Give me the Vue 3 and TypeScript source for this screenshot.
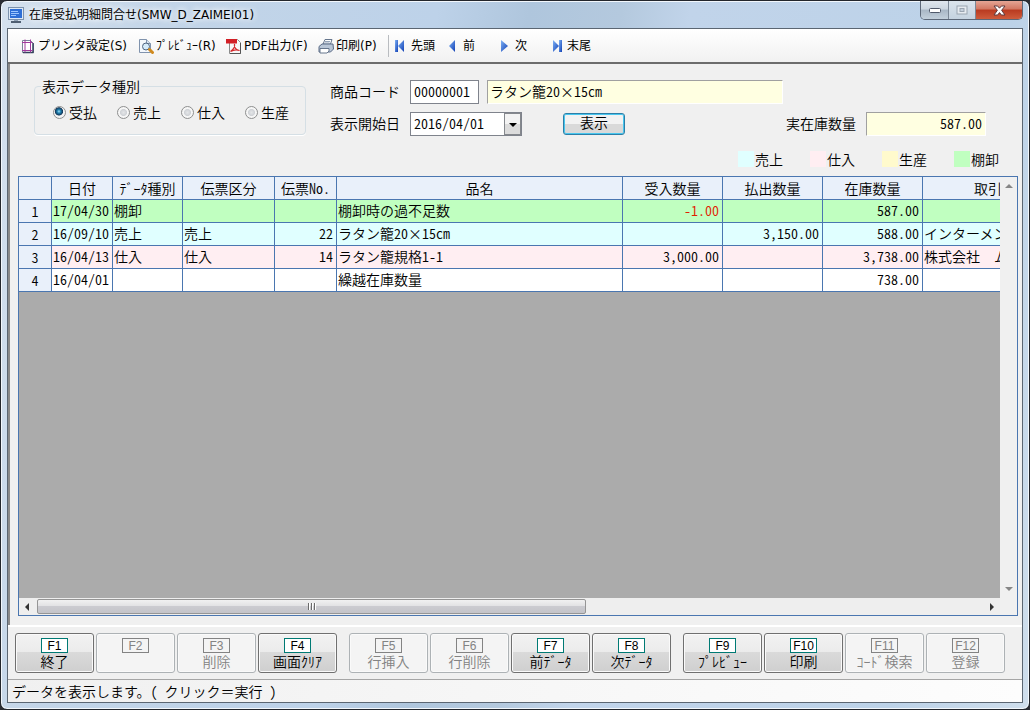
<script setup lang="ts">
import { ref } from 'vue'

interface Tool { icon: string; label: string; width: string }
interface FnKey { key: string; label: string; enabled: boolean }
interface Row {
  tone: string
  date: string
  kind: string
  slip: string
  no: string
  name: string
  inQty: string
  outQty: string
  stock: string
  partner: string
}

const tools: Tool[] = [
  { icon: 'setup', label: 'プリンタ設定(S)', width: 'w-setup' },
  { icon: 'preview', label: 'ﾌﾟﾚﾋﾞｭｰ(R)', width: 'w-preview' },
  { icon: 'pdf', label: 'PDF出力(F)', width: 'w-pdf' },
  { icon: 'print', label: '印刷(P)', width: 'w-print' },
]

const moves = [
  { icon: 'first', label: '先頭' },
  { icon: 'prev', label: '前' },
  { icon: 'next', label: '次' },
  { icon: 'last', label: '末尾' },
]

const kinds = ['受払', '売上', '仕入', '生産']
const kind = ref('受払')
const code = ref('00000001')
const productName = 'ラタン籠20×15cm'
const startDate = ref('2016/04/01')

const legends = [
  { tone: 'sales', label: '売上' },
  { tone: 'purchase', label: '仕入' },
  { tone: 'product', label: '生産' },
  { tone: 'count', label: '棚卸' },
]

const headers = ['日付', 'ﾃﾞｰﾀ種別', '伝票区分', '伝票No.', '品名', '受入数量', '払出数量', '在庫数量', '取引先名']

const rows: Row[] = [
  { tone: 'count', date: '17/04/30', kind: '棚卸', slip: '', no: '', name: '棚卸時の過不足数', inQty: '-1.00', outQty: '', stock: '587.00', partner: '' },
  { tone: 'sales', date: '16/09/10', kind: '売上', slip: '売上', no: '22', name: 'ラタン籠20×15cm', inQty: '', outQty: '3,150.00', stock: '588.00', partner: 'インターメン' },
  { tone: 'purchase', date: '16/04/13', kind: '仕入', slip: '仕入', no: '14', name: 'ラタン籠規格1-1', inQty: '3,000.00', outQty: '', stock: '3,738.00', partner: '株式会社　ム' },
  { tone: 'plain', date: '16/04/01', kind: '', slip: '', no: '', name: '繰越在庫数量', inQty: '', outQty: '', stock: '738.00', partner: '' },
]

const keyGroups: FnKey[][] = [
  [
    { key: 'F1', label: '終了', enabled: true },
    { key: 'F2', label: '', enabled: false },
    { key: 'F3', label: '削除', enabled: false },
    { key: 'F4', label: '画面ｸﾘｱ', enabled: true },
  ],
  [
    { key: 'F5', label: '行挿入', enabled: false },
    { key: 'F6', label: '行削除', enabled: false },
    { key: 'F7', label: '前ﾃﾞｰﾀ', enabled: true },
    { key: 'F8', label: '次ﾃﾞｰﾀ', enabled: true },
  ],
  [
    { key: 'F9', label: 'ﾌﾟﾚﾋﾞｭｰ', enabled: true },
    { key: 'F10', label: '印刷', enabled: true },
    { key: 'F11', label: 'ｺｰﾄﾞ検索', enabled: false },
    { key: 'F12', label: '登録', enabled: false },
  ],
]

const status = 'データを表示します。( クリック＝実行 )'

// Splits text into runs: ASCII takes half-width forms, the multiplication sign a full-width one.
function runs(text: string): { text: string; form: string }[] {
  return (text.match(/[\x20-\x7e]+|×|[^\x20-\x7e×]+/g) ?? []).map((t) => ({
    text: t,
    form: t === '×' ? 'full' : /^[\x20-\x7e]/.test(t) ? 'half' : '',
  }))
}
</script>

<template>
  <div class="window">
    <header class="titlebar">
      <svg class="app-icon" width="16" height="16" viewBox="0 0 16 16" aria-hidden="true">
        <rect x="0.5" y="0.5" width="15" height="12" fill="#dfe9f5" stroke="#7d93ad" />
        <rect x="2" y="2" width="12" height="9" fill="#2e6fd6" />
        <path d="M3 4.500h7M3 6.500h8M3 8.500h5" stroke="#9cc6ff" />
        <path d="M6 13h4v1H6z" fill="#8fa0b4" />
        <path d="M3 14h10v2H3z" fill="#4f5f73" />
      </svg>
      <h1 class="title">在庫受払明細問合せ(SMW_D_ZAIMEI01)</h1>
      <div class="caption">
        <button class="cap cap-min" type="button" aria-label="最小化">
          <svg width="14" height="8" viewBox="0 0 14 8"><rect x="1.5" y="2.5" width="11" height="4" rx="1" fill="#fff" stroke="#50596a" /></svg>
        </button>
        <button class="cap cap-max" type="button" aria-label="最大化" disabled>
          <svg width="12" height="10" viewBox="0 0 12 10"><rect x="1" y="1" width="10" height="8" fill="#e6ebf0" stroke="#9aa5b1" /><rect x="4" y="3.5" width="4" height="3" fill="#c5d0dc" stroke="#9aa5b1" /></svg>
        </button>
        <button class="cap cap-close" type="button" aria-label="閉じる">
          <svg width="13" height="11" viewBox="0 0 13 11"><path d="M1 1h3.6L6.5 3.2 8.4 1H12L8.6 5.3 12 10H8.4L6.5 7.6 4.6 10H1l3.4-4.7z" fill="#fff" stroke="#5c3a3f" /></svg>
        </button>
      </div>
    </header>

    <div class="client">
      <nav class="toolbar">
        <button v-for="t in tools" :key="t.icon" type="button" class="tool" :class="t.width">
          <svg width="16" height="16" viewBox="0 0 16 16" aria-hidden="true">
            <template v-if="t.icon === 'setup'">
              <path d="M2.500 2.500h8l3 3v9h-11z" fill="#fff" stroke="#7a8499" />
              <path d="M13 5v10M3 14.500h10.500" stroke="#34435c" stroke-width="1.500" />
              <path d="M5 1.500v13M10.500 1.500v13M2 4.500h10.500M2 12.500h10.500" stroke="#a03a9c" />
            </template>
            <template v-else-if="t.icon === 'preview'">
              <path d="M1.500 1.500h7l4 4v9h-11z" fill="#f4f8fd" stroke="#8093ad" />
              <path d="M8.500 1.500v4h4" fill="#d7e3f0" stroke="#8093ad" />
              <circle cx="8" cy="8.500" r="3.500" fill="#d5ebfb" stroke="#4e6480" />
              <path d="M11.500 11.500l3 3" stroke="#d08a1e" stroke-width="3" stroke-linecap="round" />
            </template>
            <template v-else-if="t.icon === 'pdf'">
              <path d="M3.500 1.500h8l3 3v11h-11z" fill="#f7f7f7" stroke="#8b8b8b" />
              <path d="M14.500 5v10.500H4" fill="none" stroke="#555" />
              <path d="M0 1h11v4.500H0z" fill="#d21f26" />
              <path d="M4.500 13.500c3-2 4.500-5 4-7.500-.8 3.500 1.500 6 5 6.500-3-1.300-6-.8-9 1z" fill="none" stroke="#d4282c" stroke-width="1.200" />
            </template>
            <template v-else>
              <path d="M5 6l2-4.500h7L12.500 6z" fill="#fff" stroke="#66768d" />
              <path d="M1 8.500L4 6h11l.5 5-3 3H1z" fill="#b9c6d7" stroke="#5a6b86" />
              <path d="M2 10.500h9v2.500l-2 2H2z" fill="#fff" stroke="#66768d" />
              <path d="M7 3.500h5M6.500 5h5" stroke="#93a3b8" />
            </template>
          </svg>
          <span>{{ t.label }}</span>
        </button>
        <span class="divider"></span>
        <button v-for="m in moves" :key="m.icon" type="button" class="tool move">
          <svg width="16" height="16" viewBox="0 0 16 16" aria-hidden="true">
            <defs>
              <linearGradient :id="'g-' + m.icon" x1="0" y1="0" x2="1" y2="1">
                <stop offset="0" stop-color="#7fb2f5" />
                <stop offset="1" stop-color="#103fb4" />
              </linearGradient>
            </defs>
            <g :fill="'url(#g-' + m.icon + ')'">
              <template v-if="m.icon === 'first'">
                <path d="M3 2h3v12H3z" />
                <path d="M12 2v12L6 8z" />
              </template>
              <path v-else-if="m.icon === 'prev'" d="M11 2v12L5 8z" />
              <path v-else-if="m.icon === 'next'" d="M5 2v12l7-6z" />
              <template v-else>
                <path d="M5 2v12l6-6z" />
                <path d="M11 2h3v12h-3z" />
              </template>
            </g>
          </svg>
          <span>{{ m.label }}</span>
        </button>
      </nav>

      <main class="panel">
        <form class="query" @submit.prevent>
          <fieldset class="kinds">
            <legend>表示データ種別</legend>
            <label v-for="k in kinds" :key="k" class="radio">
              <input v-model="kind" type="radio" name="kind" :value="k" />
              <span>{{ k }}</span>
            </label>
          </fieldset>
          <div class="fields">
            <div class="line">
              <label class="caption-label" for="code">商品コード</label>
              <input id="code" v-model="code" class="box code half" type="text" />
              <output class="readout name" for="code"><span v-for="(r, i) in runs(productName)" :key="i" :class="r.form">{{ r.text }}</span></output>
            </div>
            <div class="line">
              <label class="caption-label" for="start">表示開始日</label>
              <span class="combo">
                <select id="start" v-model="startDate" class="box half">
                  <option>2016/04/01</option>
                </select>
                <span class="drop" aria-hidden="true"></span>
              </span>
              <button class="show" type="submit">表示</button>
              <label class="stock-label" for="stock">実在庫数量</label>
              <output id="stock" class="readout stock half">587.00</output>
            </div>
          </div>
        </form>

        <ul class="legends">
          <li v-for="l in legends" :key="l.tone"><i class="swatch" :class="l.tone"></i>{{ l.label }}</li>
        </ul>

        <section class="grid">
          <div class="view">
            <table>
              <colgroup>
                <col class="c-num" /><col class="c-date" /><col class="c-kind" /><col class="c-slip" /><col class="c-no" />
                <col class="c-name" /><col class="c-qty" /><col class="c-qty" /><col class="c-qty" /><col class="c-partner" />
              </colgroup>
              <thead>
                <tr>
                  <th></th>
                  <th v-for="h in headers" :key="h" scope="col"><span v-for="(r, i) in runs(h)" :key="i" :class="r.form">{{ r.text }}</span></th>
                </tr>
              </thead>
              <tbody>
                <tr v-for="(row, i) in rows" :key="row.date" :class="row.tone">
                  <th scope="row" class="half">{{ i + 1 }}</th>
                  <td class="half">{{ row.date }}</td>
                  <td>{{ row.kind }}</td>
                  <td>{{ row.slip }}</td>
                  <td class="num half">{{ row.no }}</td>
                  <td><span v-for="(r, j) in runs(row.name)" :key="j" :class="r.form">{{ r.text }}</span></td>
                  <td class="num half" :class="{ minus: row.inQty.startsWith('-') }">{{ row.inQty }}</td>
                  <td class="num half">{{ row.outQty }}</td>
                  <td class="num half">{{ row.stock }}</td>
                  <td>{{ row.partner }}</td>
                </tr>
              </tbody>
            </table>
          </div>
          <div class="vbar">
            <i class="arrow up"></i>
            <i class="arrow down"></i>
          </div>
          <div class="hbar">
            <i class="arrow left"></i>
            <div class="track"><div class="thumb"><i></i><i></i><i></i></div></div>
            <i class="arrow right"></i>
          </div>
          <div class="corner"></div>
        </section>
      </main>

      <div class="keys">
        <div v-for="(g, gi) in keyGroups" :key="gi" class="group">
          <button v-for="f in g" :key="f.key" type="button" class="fn" :disabled="!f.enabled">
            <span class="badge">{{ f.key }}</span>
            <span class="fn-label">{{ f.label }}</span>
          </button>
        </div>
      </div>

      <footer class="status"><span v-for="(r, i) in runs(status)" :key="i" :class="r.form">{{ r.text }}</span></footer>
    </div>
  </div>
</template>

<style>
body {
  margin: 0;
  background: #2b2d33;
}
</style>

<style scoped>
.window {
  box-sizing: border-box;
  min-height: 100vh;
  display: flex;
  flex-direction: column;
  padding: 0 6px 6px;
  border: 1px solid #23262c;
  border-radius: 7px;
  background: linear-gradient(100deg, #d5e1ee 0%, #c3d5e8 14%, #bdd2e9 38%, #afc6dd 46%, #b4c9de 54%, #c1d4ea 60%, #bcd2e8 88%, #cfdeec 100%);
  box-shadow: inset 0 0 0 1px #f2f7fc;
  font-family: "Noto Sans CJK JP", sans-serif;
  font-size: 14px;
  font-weight: 350;
  line-height: 16px;
  color: #000;
}
button, input, select {
  font: inherit;
  color: inherit;
  margin: 0;
}
.half {
  font-feature-settings: "hwid";
  white-space: pre;
}
.full {
  font-feature-settings: "fwid";
}

.titlebar {
  display: flex;
  align-items: center;
  height: 27px;
  padding-left: 1px;
}
.title {
  margin: 0 0 0 5px;
  flex: 1;
  font: 12px/16px "DejaVu Sans", "Noto Sans CJK JP", sans-serif;
  text-shadow: 0 0 6px #fff, 0 0 6px #fff;
}
.caption {
  display: flex;
  align-self: flex-start;
  border: 1px solid #5d6878;
  border-top: 0;
  border-radius: 0 0 5px 5px;
  overflow: hidden;
}
.cap {
  display: flex;
  align-items: center;
  justify-content: center;
  width: 28px;
  height: 18px;
  padding: 0;
  border: 0;
  border-right: 1px solid #7c8896;
  background: linear-gradient(#dfe6ee 0, #ccd6e0 45%, #a9b7c5 50%, #c3d0dc 100%);
}
.cap-max {
  width: 27px;
  background: linear-gradient(#dbe4ec 0, #c5d3e0 100%);
}
.cap-close {
  width: 46px;
  border-right: 0;
  background: linear-gradient(#e5a595 0, #d27762 45%, #b93a20 50%, #cf5c3c 100%);
}

.client {
  flex: 1;
  display: flex;
  flex-direction: column;
  border: 1px solid #5b6672;
  background: #f0f0f0;
}
.toolbar {
  display: flex;
  align-items: center;
  height: 33px;
  padding-left: 12px;
  border-bottom: 2px solid #6c6c6c;
  background: linear-gradient(#ffffff, #f1f1f1);
  font: 12px/16px "DejaVu Sans", "Noto Sans CJK JP", sans-serif;
}
.tool {
  display: flex;
  align-items: center;
  gap: 2px;
  padding: 0;
  border: 0;
  background: none;
  white-space: nowrap;
}
.tool svg {
  flex: none;
}
.w-setup { width: 118px; }
.w-preview { width: 88px; }
.w-pdf { width: 92px; }
.w-print { width: 70px; }
.move {
  gap: 3px;
  width: 52px;
}
.divider {
  width: 1px;
  height: 22px;
  margin-right: 3px;
  background: #b9bcc0;
}

.panel {
  flex: 1;
  display: flex;
  flex-direction: column;
  padding: 14px 4px 9px 8px;
  border-left: 2px solid #8a8a8a;
}
.query {
  display: flex;
}
.kinds {
  box-sizing: border-box;
  display: flex;
  width: 272px;
  height: 57px;
  min-width: 0;
  margin: 0 24px 0 16px;
  padding: 10px 0 0 18px;
  border: 1px solid #d5dfe5;
  border-radius: 4px;
  box-shadow: 0 1px 0 #fff;
}
.kinds legend {
  margin-left: -12px;
  padding: 0 1px;
}
.radio {
  display: flex;
  flex: none;
  align-items: center;
  gap: 3px;
  width: 64px;
  height: 16px;
}
.radio:last-child {
  width: auto;
}
.radio input {
  appearance: none;
  box-sizing: border-box;
  flex: none;
  width: 13px;
  height: 13px;
  border: 1px solid #8e8f8f;
  border-radius: 50%;
  background: radial-gradient(circle at 50% 50%, #e4e6e8 0, #cfd2d6 40%, #f6f6f6 50%);
}
.radio input:checked {
  background: radial-gradient(circle at 45% 40%, #9fe0f8 0, #1f7fae 20%, #16395a 42%, #f3f3f3 50%);
}
.fields {
  flex: 1;
  display: flex;
  flex-direction: column;
  gap: 8px;
  padding-top: 2px;
}
.line {
  display: flex;
  height: 24px;
  align-items: center;
}
.caption-label,
.stock-label {
  padding-bottom: 2px;
}
.caption-label {
  width: 80px;
}
.box {
  box-sizing: border-box;
  height: 24px;
  padding: 0 3px 2px;
  border: 1px solid #7f838c;
  border-radius: 0;
  background: #fff;
}
.code {
  width: 69px;
  padding-right: 0;
}
.readout {
  box-sizing: border-box;
  height: 24px;
  padding: 2px 3px 0;
  border: 1px solid #fff;
  border-top-color: #a0a0a0;
  border-left-color: #a0a0a0;
  background: #ffffe1;
  white-space: nowrap;
}
.name {
  width: 296px;
  margin-left: 8px;
  padding-left: 2px;
}
.combo {
  position: relative;
}
.combo select {
  display: block;
  appearance: none;
  width: 112px;
}
.drop {
  position: absolute;
  top: 1px;
  right: 1px;
  box-sizing: border-box;
  width: 17px;
  height: 22px;
  border: 1px solid #85888d;
  background: linear-gradient(#f3f3f3 50%, #dcdcdc 50%);
  pointer-events: none;
}
.drop::after {
  content: "";
  position: absolute;
  left: 4px;
  top: 9px;
  border: solid transparent;
  border-width: 4px 4px 0;
  border-top-color: #000;
}
.show {
  box-sizing: border-box;
  width: 62px;
  height: 22px;
  margin-left: 41px;
  padding: 0 0 4px;
  border: 1px solid #2c7fa8;
  border-radius: 3px;
  background: linear-gradient(#f2f2f2 50%, #d9d9d9 50%);
  box-shadow: inset 0 0 0 1px #48c6ee;
  line-height: 16px;
}
.stock-label {
  margin-left: auto;
}
.stock {
  width: 120px;
  margin: 0 32px 0 10px;
  text-align: right;
}

.legends {
  display: flex;
  justify-content: flex-end;
  gap: 27px;
  margin: 15px 19px 9px 0;
  padding: 0;
  list-style: none;
}
.legends li {
  display: flex;
  gap: 1px;
}
.swatch {
  width: 16px;
  height: 16px;
}
.sales { background: #e0ffff; }
.purchase { background: #ffeef2; }
.product { background: #fffacd; }
.count { background: #c0ffc0; }
.plain { background: #fff; }

.grid {
  flex: 1;
  display: grid;
  grid-template-columns: minmax(0, 1fr) 17px;
  grid-template-rows: 1fr 17px;
  border: 1px solid #4a76b0;
}
.view {
  overflow: hidden;
  background: #ababab;
}
table {
  table-layout: fixed;
  width: 1063px;
  border-collapse: separate;
  border-spacing: 0;
}
.c-num { width: 33px; }
.c-date { width: 61px; }
.c-kind { width: 70px; }
.c-slip { width: 92px; }
.c-no { width: 62px; }
.c-name { width: 286px; }
.c-qty { width: 100px; }
.c-partner { width: 159px; }
th, td {
  box-sizing: border-box;
  height: 23px;
  padding: 0 3px 3px 1px;
  border: solid #4a76b0;
  border-width: 0 1px 1px 0;
  font-weight: inherit;
  text-align: left;
  white-space: pre;
  overflow: hidden;
}
th {
  padding: 0;
  background: #e9f0fa;
  text-align: center;
}
thead th {
  padding-bottom: 1px;
}
.num {
  text-align: right;
}
.minus {
  color: #e02000;
}
.vbar {
  display: flex;
  flex-direction: column;
  justify-content: space-between;
  align-items: center;
  padding: 7px 0;
  background: #f0f0f0;
}
.hbar {
  display: flex;
  align-items: center;
  background: #eeeeee;
}
.corner {
  background: #f0f0f0;
}
.arrow {
  flex: none;
  border: solid transparent;
}
.up {
  border-width: 0 4px 4px;
  border-bottom-color: #868686;
}
.down {
  border-width: 4px 4px 0;
  border-top-color: #868686;
}
.left {
  margin: 0 8px 0 6px;
  border-width: 4px 4px 4px 0;
  border-right-color: #333;
}
.right {
  margin: 0 6px 0 6px;
  border-width: 4px 0 4px 4px;
  border-left-color: #333;
}
.track {
  flex: 1;
}
.thumb {
  box-sizing: border-box;
  display: flex;
  align-items: center;
  justify-content: center;
  gap: 1px;
  width: 58%;
  height: 15px;
  border: 1px solid #959595;
  border-radius: 2px;
  background: linear-gradient(#f1f1f1 0, #e2e2e4 45%, #cbcbd0 50%, #c4c4c9 100%);
}
.thumb i {
  width: 2px;
  height: 7px;
  background: linear-gradient(90deg, #6b6b6b 50%, #ffffff 50%);
}

.keys {
  display: flex;
  gap: 12px;
  padding: 6px 7px;
  border-top: 2px solid #fff;
  border-bottom: 1px solid #a5a5a5;
}
.group {
  display: flex;
  gap: 2px;
}
.fn {
  box-sizing: border-box;
  display: flex;
  flex-direction: column;
  align-items: center;
  width: 79px;
  height: 40px;
  padding: 4px 0 0;
  border: 1px solid #707070;
  border-radius: 3px;
  background: linear-gradient(#f2f2f2 0, #ebebeb 48%, #dadada 48%, #cfcfcf 100%);
  box-shadow: inset 0 0 0 1px #fafafa;
}
.badge {
  box-sizing: border-box;
  width: 27px;
  height: 15px;
  border: 1px solid #007a74;
  background: #fff;
  font: 12px/14px "Liberation Sans", Arial, sans-serif;
}
.fn-label {
  line-height: 16px;
  white-space: nowrap;
}
.fn:disabled {
  border-color: #adb2b5;
  background: #f4f4f4;
  color: #838383;
}
.fn:disabled .badge {
  border-color: #838383;
  background: #f4f4f4;
}
.status {
  height: 16px;
  padding: 3px 4px 3px;
  background: linear-gradient(90deg, #f0f0f0, #fdfdfd);
}
</style>
